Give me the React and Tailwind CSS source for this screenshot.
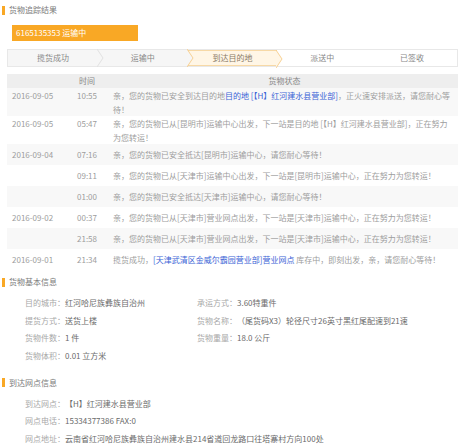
import React from "react";

const Blue = ({ children }) => <span className="text-[#3a63d6]">{children}</span>;

const rows = [
  {
    date: "2016-09-05",
    time: "10:55",
    lines: [
      <>亲，您的货物已安全到达目的地<Blue>目的地 [【H】红河建水县营业部]</Blue>，正火速安排派送，请您耐心等</>,
      <>待！</>,
    ],
  },
  {
    date: "2016-09-05",
    time: "05:47",
    lines: [
      <>亲，您的货物已从[昆明市]运输中心出发，下一站是目的地 [【H】红河建水县营业部]，正在努力</>,
      <>为您转运！</>,
    ],
  },
  { date: "2016-09-04", time: "07:16", lines: [<>亲，您的货物已安全抵达[昆明市]运输中心，请您耐心等待！</>] },
  { date: "", time: "09:11", lines: [<>亲，您的货物已从[天津市]运输中心出发，下一站是[昆明市]运输中心，正在努力为您转运！</>] },
  { date: "", time: "01:00", lines: [<>亲，您的货物已安全抵达[天津市]运输中心，请您耐心等待！</>] },
  { date: "2016-09-02", time: "00:37", lines: [<>亲，您的货物已从[天津市]营业网点出发，下一站是[天津市]运输中心，正在努力为您转运！</>] },
  { date: "", time: "21:58", lines: [<>亲，您的货物已从[天津市]营业网点出发，下一站是[天津市]运输中心，正在努力为您转运！</>] },
  {
    date: "2016-09-01",
    time: "21:34",
    lines: [<>揽货成功，<Blue>[天津武清区金威尔霸园营业部]营业网点</Blue> 库存中，即刻出发，亲，请您耐心等待！</>],
  },
];

const steps = ["揽货成功", "运输中", "到达目的地", "派送中", "已签收"];

function Chevron({ fill, stroke }) {
  return (
    <svg className="absolute top-[-1px] right-[-6px] z-10 h-[18px] w-[7px]" viewBox="0 0 7 18">
      <polygon points="0,0 6,9 0,18" fill={fill} />
      <polyline points="0,0 6,9 0,18" fill="none" stroke={stroke} strokeWidth="0.8" />
    </svg>
  );
}

function Section({ children }) {
  return (
    <div className="flex h-[12px] items-center gap-[4px]">
      <div className="ml-[2px] h-[9px] w-[3px] bg-[#f9a825]" />
      <span className="text-[8px] leading-[12px] text-[#7a7a7a]">{children}</span>
    </div>
  );
}

function Info({ label, value }) {
  return (
    <div className="flex h-[17.7px] items-center whitespace-nowrap">
      <span className="text-[#a8a8a8]">{label}：</span>
      <span className="text-[#6a6a6a]">{value}</span>
    </div>
  );
}

export default function App() {
  return (
    <div className="w-[465px] h-[446px] overflow-hidden bg-white pt-[4px] font-['Noto_Sans_CJK_SC','Liberation_Sans',sans-serif] text-[8px]">
      <Section>货物追踪结果</Section>

      <div className="ml-[12px] mt-[9px] flex h-[16px] w-[126px] items-center bg-[#f9a825] pl-[4px] text-[8px] text-white">
        6165135353 运输中
      </div>

      <div className="mx-[7px] mt-[8px] flex h-[18px] border border-[#e8e8e8]">
        {steps.map((s, i) => {
          const active = i === 2;
          const bg = i < 2 ? "bg-[#f6f6f6]" : active ? "bg-[#fff6e6] border-y border-[#f7d9a6]" : "bg-white";
          return (
            <div
              key={s}
              className={"relative flex flex-1 items-center justify-center " + (active ? "text-[#8a7a66] " : "text-[#888] ") + bg}
            >
              {s}
              {i === 0 && <Chevron fill="#f6f6f6" stroke="#dcdcdc" />}
              {i === 1 && <Chevron fill="#f6f6f6" stroke="#f5c77e" />}
              {i === 2 && <Chevron fill="#fff6e6" stroke="#f5c77e" />}
            </div>
          );
        })}
      </div>

      <div className="mx-[7px] mt-[7px]">
        <div className="flex h-[14px] items-center bg-[#eeeeee] text-[#888]">
          <div className="w-[56px]" />
          <div className="w-[48px] text-center">时间</div>
          <div className="flex-1 text-center">货物状态</div>
        </div>
        {rows.map((r, i) => (
          <div
            key={i}
            className={
              "flex leading-[14px] text-[#9d9d9d] " +
              (r.lines.length > 1 ? "h-[28px] items-start pt-[1px] " : "h-[21px] items-center ") +
              (i % 2 === 0 ? "bg-[#f8f8f8]" : "bg-white")
            }
          >
            <div className="w-[56px] pl-[5px]">{r.date}</div>
            <div className="w-[48px] text-center">{r.time}</div>
            <div className="flex-1 pl-[2px] whitespace-nowrap">
              {r.lines.map((l, j) => (
                <div key={j}>{l}</div>
              ))}
            </div>
          </div>
        ))}
      </div>

      <div className="mt-[6px]">
        <Section>货物基本信息</Section>
      </div>
      <div className="ml-[25px] mt-[6px] flex">
        <div className="w-[172px]">
          <Info label="目的城市" value="红河哈尼族彝族自治州" />
          <Info label="提货方式" value="送货上楼" />
          <Info label="货物件数" value="1 件" />
          <Info label="货物体积" value="0.01 立方米" />
        </div>
        <div>
          <Info label="承运方式" value="3.60特重件" />
          <Info label="货物名称" value="（尾货码X3）轮径尺寸26英寸黑红尾配速到21速" />
          <Info label="货物重量" value="18.0 公斤" />
        </div>
      </div>

      <div className="mt-[12px]">
        <Section>到达网点信息</Section>
      </div>
      <div className="ml-[25px] mt-[6px]">
        <Info label="到达网点" value=" 【H】红河建水县营业部" />
        <Info label="网点电话" value="15334377386 FAX:0" />
        <Info label="网点地址" value="云南省红河哈尼族彝族自治州建水县214省道回龙路口往塔寨村方向100处" />
      </div>
    </div>
  );
}
